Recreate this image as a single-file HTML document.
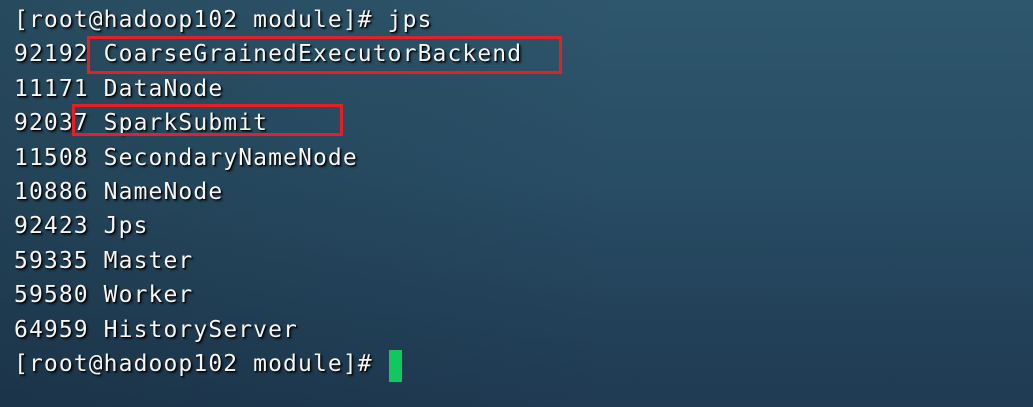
<!DOCTYPE html>
<html><head><style>
html,body{margin:0;padding:0}
body{width:1033px;height:407px;overflow:hidden;position:relative;
background:linear-gradient(180deg,#2e566c 0%,#284d64 45%,#1f3a52 100%);}
.sh{position:absolute;inset:0;background:linear-gradient(90deg,rgba(10,20,30,0.18),rgba(0,0,0,0) 60%)}
pre{position:absolute;left:14px;top:3px;margin:0;font-family:"DejaVu Sans Mono","Liberation Mono",monospace;
font-size:23px;letter-spacing:1.1px;line-height:34.4px;color:#f6f6f6;text-shadow:1px 1px 1px #000,2px 2px 2px rgba(0,0,0,.6)}
.box{position:absolute;border:3px solid #e41f26;box-sizing:border-box}
.cur{position:absolute;left:389px;top:350px;width:13px;height:32px;background:#10c95e}
</style></head><body><div class="sh"></div>
<pre>[root@hadoop102 module]# jps
92192 CoarseGrainedExecutorBackend
11171 DataNode
92037 SparkSubmit
11508 SecondaryNameNode
10886 NameNode
92423 Jps
59335 Master
59580 Worker
64959 HistoryServer
[root@hadoop102 module]# </pre>
<div class="box" style="left:87px;top:36px;width:475px;height:38px"></div>
<div class="box" style="left:72px;top:104px;width:271px;height:32px"></div>
<div class="cur"></div>
</body></html>
